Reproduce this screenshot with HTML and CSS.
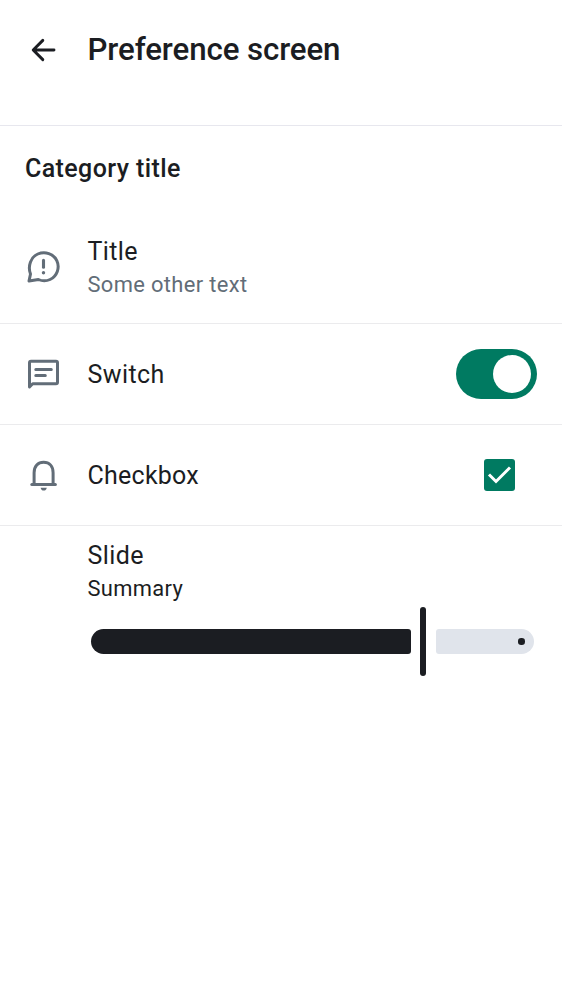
FILE: index.html
```html
<!DOCTYPE html>
<html lang="en">
<head>
<meta charset="utf-8">
<title>Preference screen</title>
<link rel="stylesheet" href="styles.css">
</head>
<body>
<header class="app-bar">
  <svg class="icon" viewBox="0 0 38 38"><path d="M29 19H8.5M17.8 9.4L8.2 19L17.8 28.6" fill="none" stroke="#1b1d22" stroke-width="2.9" stroke-linecap="round" stroke-linejoin="round"/></svg>
  <h1 class="app-title">Preference screen</h1>
</header>
<main>
  <h2 class="category">Category title</h2>
  <section class="row row-title">
    <svg class="icon" viewBox="0 0 38 38"><path d="M4 32.1L5.5 25C2.5 17 5.8 8.1 12.8 5C20.1 1.9 28.5 4.7 31.8 11.6C35.1 18.7 32.1 27.2 25.1 30.5C21.2 32.3 17.1 32.2 13.4 30.5Z" fill="none" stroke="#626d78" stroke-width="3" stroke-linejoin="round"/><path d="M18.5 11.4V18.2" stroke="#626d78" stroke-width="3.1" stroke-linecap="round"/><circle cx="18.5" cy="23.8" r="1.7" fill="#626d78"/></svg>
    <div class="texts"><span class="title">Title</span><span class="summary muted">Some other text</span></div>
  </section>
  <section class="row">
    <svg class="icon" viewBox="0 0 38 38"><path d="M4.5 32V7.7Q4.5 6.2 6 6.2H31Q32.5 6.2 32.5 7.7V27.3Q32.5 28.8 31 28.8H7.7Z" fill="none" stroke="#626d78" stroke-width="3" stroke-linejoin="round"/><path d="M10.8 14.4H26.3M10.8 20.4H20.3" stroke="#626d78" stroke-width="3" stroke-linecap="round"/></svg>
    <span class="title lowered">Switch</span>
    <span class="switch"><span class="knob"></span></span>
  </section>
  <section class="row">
    <svg class="icon" viewBox="0 0 38 38"><path d="M9.1 28.3V16.8C9.1 10 13 6.2 18.6 6.2S28.1 10 28.1 16.8V28.3" fill="none" stroke="#626d78" stroke-width="3"/><path d="M6.8 28.5H30.4" stroke="#626d78" stroke-width="3" stroke-linecap="round"/><path d="M15.6 31.7H21.8C21.4 33.6 20.2 34.6 18.7 34.6S16 33.6 15.6 31.7Z" fill="#626d78"/></svg>
    <span class="title lowered checkbox-label">Checkbox</span>
    <span class="checkbox"><svg class="check" viewBox="0 0 31 31"><path d="M5 15.5L12 22.5L26 8.5" fill="none" stroke="#fff" stroke-width="3"/></svg></span>
  </section>
  <section class="slide">
    <span class="title">Slide</span>
    <span class="summary">Summary</span>
    <div class="slider">
      <span class="active"></span><span class="thumb"></span><span class="inactive"><span class="stop"></span></span>
    </div>
  </section>
</main>
</body>
</html>
```
FILE: styles.css
```css
* { box-sizing: border-box; }
body { margin: 0; background: #fff; color: #1b1d22; font-family: Roboto, sans-serif; }
.app-bar { display: flex; height: 126px; padding: 31px 25px 0; border-bottom: 1px solid #e7e7ee; }
.icon { flex: none; width: 38px; height: 38px; margin-right: 24.5px; }
.app-title { margin: 0; font-size: 31.25px; line-height: 38px; font-weight: 500; letter-spacing: -.1px; white-space: nowrap; }
.category { height: 86px; margin: 0; padding: 24px 25px 0; font-size: 25px; line-height: 38px; font-weight: 500; letter-spacing: .4px; }
.row { display: flex; align-items: center; height: 101px; padding: 0 25px; border-bottom: 1px solid #ebebed; }
.row-title { height: 112px; }
.texts { display: flex; flex-direction: column; padding-bottom: 4px; }
.title { font-size: 25px; line-height: 38px; letter-spacing: .4px; }
.lowered { padding-top: 1px; }
.checkbox-label { letter-spacing: .25px; }
.summary { font-size: 21.9px; line-height: 28px; letter-spacing: .35px; }
.muted { color: #626d78; }
.switch { display: flex; justify-content: flex-end; width: 81px; height: 50px; margin-left: auto; padding: 6px; border-radius: 25px; background: #007a61; }
.knob { width: 38px; height: 38px; border-radius: 50%; background: #fff; }
.checkbox { width: 31px; height: 32px; margin: 0 22px 0 auto; border-radius: 3px; background: #007a61; }
.check { display: block; width: 31px; height: 31px; }
.slide { display: flex; flex-direction: column; padding: 11px 28px 0 87.5px; }
.slider { display: flex; align-items: center; height: 69px; margin: 4px 0 0 3px; }
.active { width: 320px; height: 25px; border-radius: 12.5px 3px 3px 12.5px; background: #1b1d22; }
.thumb { width: 6px; height: 69px; margin: 0 9.5px; border-radius: 3px; background: #1b1d22; }
.inactive { display: flex; flex: 1; align-items: center; justify-content: flex-end; height: 25px; padding-right: 9.5px; border-radius: 3px 12.5px 12.5px 3px; background: #e0e4eb; }
.stop { width: 6.4px; height: 6.4px; border-radius: 50%; background: #1b1d22; }
```
